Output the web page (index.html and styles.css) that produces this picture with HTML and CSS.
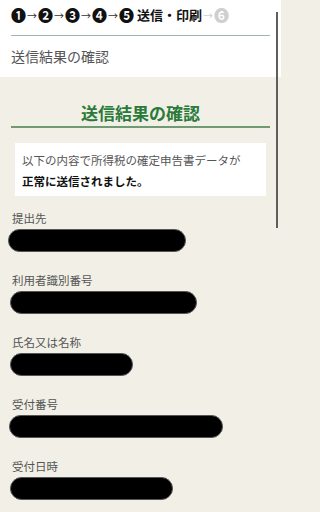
FILE: index.html
```html
<!DOCTYPE html>
<html lang="ja">
<head>
<meta charset="utf-8">
<link rel="stylesheet" href="styles.css">
</head>
<body>
<header class="head">
  <div class="steps"><span class="num">❶</span><span class="arr">→</span><span class="num">❷</span><span class="arr">→</span><span class="num">❸</span><span class="arr">→</span><span class="num">❹</span><span class="arr">→</span><span class="num">❺</span><span class="cur">送信・印刷</span><span class="arr off">→</span><span class="num off">❻</span></div>
  <div class="page-title">送信結果の確認</div>
</header>
<main class="main">
  <h2 class="heading">送信結果の確認</h2>
  <div class="msg">
    <p class="msg-line">以下の内容で所得税の確定申告書データが</p>
    <p class="msg-line strong">正常に送信されました。</p>
  </div>
  <div class="item"><div class="label">提出先</div><div class="pill w1"></div></div>
  <div class="item"><div class="label">利用者識別番号</div><div class="pill w2"></div></div>
  <div class="item"><div class="label">氏名又は名称</div><div class="pill w3"></div></div>
  <div class="item"><div class="label">受付番号</div><div class="pill w4"></div></div>
  <div class="item"><div class="label">受付日時</div><div class="pill w5"></div></div>
</main>
<div class="scrollbar"></div>
</body>
</html>
```
FILE: styles.css
```css
html, body {
  margin: 0;
  padding: 0;
}
html {
  background: #f1efe6;
}
body {
  width: 281px;
  height: 512px;
  overflow: hidden;
  background: #f1efe6;
  font-family: "Noto Sans CJK JP", "Noto Sans", sans-serif;
  position: relative;
}
.head {
  background: #fff;
}
.steps {
  margin: 0 11px;
  padding: 5px 0 10px;
  height: 20px;
  line-height: 20px;
  font-size: 13px;
  font-weight: 700;
  color: #111;
  border-bottom: 1px solid #9db9ab;
  white-space: nowrap;
  overflow: hidden;
}
.num {
  font-size: 15px;
  line-height: 20px;
  vertical-align: top;
}
.arr {
  font-weight: 400;
  font-size: 10px;
  color: #333;
  margin: 0 1px;
}
.cur {
  margin-left: 3px;
}
.off {
  color: #cfcfcf;
}
.page-title {
  height: 41px;
  line-height: 41px;
  padding-left: 11px;
  font-size: 14px;
  color: #555;
}
.main {
  padding: 0 11px;
}
.heading {
  margin: 24px 0 0;
  padding-bottom: 1px;
  line-height: 24px;
  font-size: 17px;
  font-weight: 700;
  color: #2a7a3a;
  text-align: center;
  border-bottom: 2px solid #6f9a72;
}
.msg {
  margin: 15px 4px 0;
  padding: 7px 7px 4px;
  background: #fff;
}
.msg-line {
  margin: 0;
  line-height: 21px;
  font-size: 11.5px;
  color: #555;
}
.msg-line.strong {
  font-weight: 700;
  color: #111;
}
.item {
  margin-top: 12px;
  margin-bottom: 18px;
}
.item + .item {
  margin-top: 0;
}
.label {
  height: 20px;
  line-height: 20px;
  font-size: 11.5px;
  color: #555;
  padding-left: 1px;
}
.pill {
  margin: 1px 0 0 -2px;
  height: 21px;
  border: 1px solid #555;
  border-radius: 12px;
  background: #000;
}
.w1 { width: 176px; margin-left: -3px; }
.w2 { width: 185px; margin-left: -1px; }
.w3 { width: 121px; margin-left: -1px; }
.w4 { width: 212px; margin-left: -2px; }
.w5 { width: 161px; margin-left: -1px; }
.scrollbar {
  position: absolute;
  top: 12px;
  left: 276px;
  width: 2px;
  height: 216px;
  background: #5e5e5e;
}
```
